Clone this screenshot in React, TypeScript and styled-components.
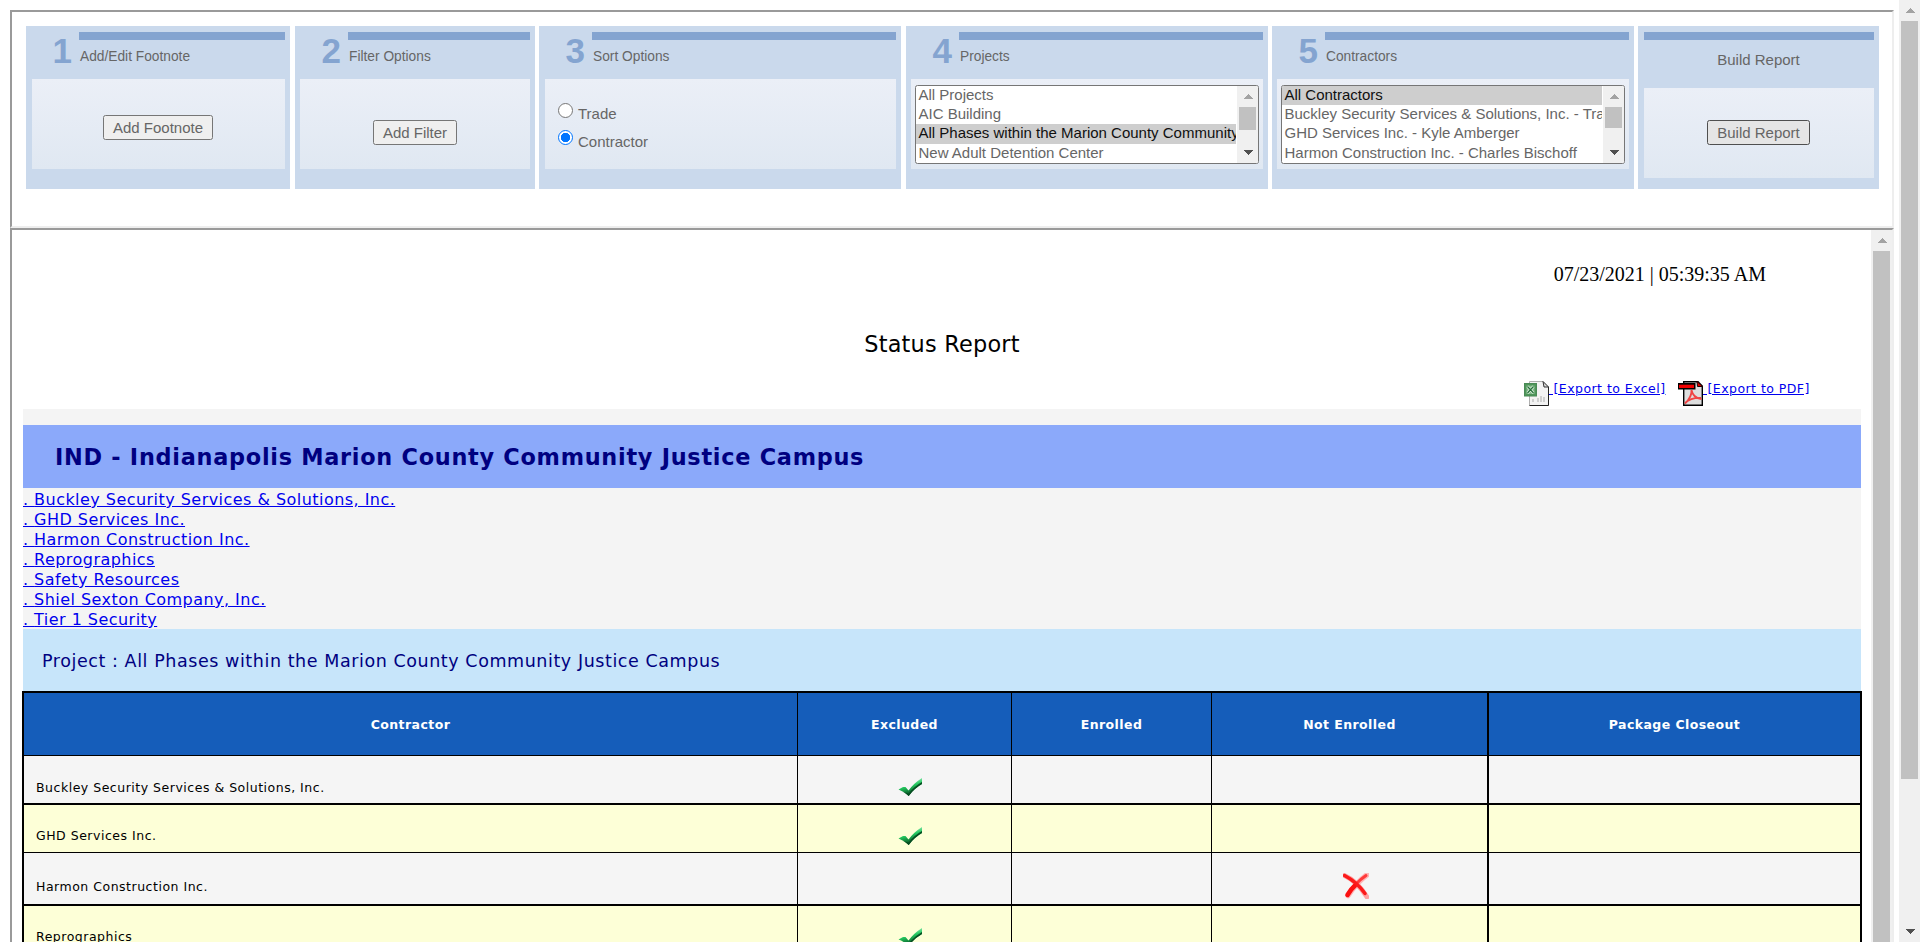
import React from "react";
import styled, { createGlobalStyle } from "styled-components";

const Global = createGlobalStyle`
  * { box-sizing: border-box; }
  html, body { margin: 0; height: 942px; overflow: hidden; background: #fff; }
`;

const arial = `"Liberation Sans", Arial, sans-serif`;
const verdana = `Verdana, "DejaVu Sans", sans-serif`;

const Page = styled.div`
  display: flex;
  width: 1920px;
  height: 942px;
  overflow: hidden;
`;
const Frames = styled.main`
  display: flex;
  flex-direction: column;
  width: 1884px;
  margin: 10px 5px 0 10px;
`;
const FrameBase = styled.section`
  border: 2px solid;
  border-color: #9a9a9a #eee #eee #9a9a9a;
  flex: none;
`;
const OptionsFrame = styled(FrameBase)`
  height: 218px;
  padding: 14px 13px 0 14px;
`;
const ReportFrame = styled(FrameBase)`
  display: flex;
  height: 760px;
`;

/* Scroll bars */
const Track = styled.div<{ $height: string }>`
  width: 21px;
  height: ${(p) => p.$height};
  flex: none;
  display: flex;
  flex-direction: column;
  align-items: center;
  background: #f0f0f0;
`;
const Thumb = styled.div<{ $size: number }>`
  width: 17px;
  height: ${(p) => p.$size}px;
  background: #c1c1c1;
  flex: none;
`;
const ArrowBox = styled.div`
  height: 21px;
  flex: none;
  display: flex;
  align-items: center;
`;
const Spacer = styled.div`
  flex: 1;
`;
const Up = () => (
  <ArrowBox>
    <svg width="10" height="5" viewBox="0 0 10 5" shapeRendering="crispEdges">
      <path d="M5 0 L10 5 H0 Z" fill="#a3a3a3" />
    </svg>
  </ArrowBox>
);
const Down = () => (
  <ArrowBox>
    <svg width="10" height="5" viewBox="0 0 10 5" shapeRendering="crispEdges">
      <path d="M0 0 H10 L5 5 Z" fill="#505050" />
    </svg>
  </ArrowBox>
);

/* Option panels */
const Steps = styled.div`
  display: flex;
`;
const Step = styled.div<{ $w: number; $gap: number; $left: number }>`
  width: ${(p) => p.$w}px;
  height: 163px;
  margin-right: ${(p) => p.$gap}px;
  padding: 6px 5px 0 ${(p) => p.$left}px;
  background: #cad9ec;
  flex: none;
  color: #666;
  font: 15px ${arial};
`;
const StepHead = styled.div<{ $h: number }>`
  display: flex;
  height: ${(p) => p.$h}px;
`;
const StepNumber = styled.div<{ $w: number }>`
  width: ${(p) => p.$w}px;
  padding: 0 7px 0 0;
  text-align: right;
  font: bold 35px/38px ${arial};
  color: #84a4d0;
`;
const StepTitle = styled.div<{ $center?: boolean }>`
  flex: 1;
  border-top: 8px solid #84a4d0;
  padding: ${(p) => (p.$center ? "12px 1px 0 0" : "8px 0 0 1px")};
  text-align: ${(p) => (p.$center ? "center" : "left")};
  font-size: ${(p) => (p.$center ? 15 : 13.75)}px;
  line-height: ${(p) => (p.$center ? 16 : 17)}px;
`;
const StepBody = styled.div<{ $pad: string }>`
  height: 90px;
  display: flex;
  flex-direction: column;
  align-items: flex-start;
  padding: ${(p) => p.$pad};
  background: linear-gradient(#ebeff7, #e0e8f2);
`;
const Button = styled.button<{ $w: number; $hover?: boolean }>`
  width: ${(p) => p.$w}px;
  height: 25px;
  padding: 0;
  border: 1px solid ${(p) => (p.$hover ? "#4f4f4f" : "#767676")};
  border-radius: 2.5px;
  background: ${(p) => (p.$hover ? "#e5e5e5" : "#efefef")};
  color: #666;
  font: 15px/22px ${arial};
`;
const RadioRow = styled.label`
  display: flex;
  height: 27px;
  gap: 5px;
`;
const RadioLabel = styled.span<{ $top: number }>`
  padding-top: ${(p) => p.$top}px;
  line-height: 17px;
`;
const RadioDot = styled.span<{ $on?: boolean }>`
  width: 15px;
  height: 15px;
  border-radius: 50%;
  border: ${(p) => (p.$on ? "1.5px solid #0075ff" : "1px solid #767676")};
  background: ${(p) => (p.$on ? "radial-gradient(circle, #0075ff 4.4px, #fff 5px)" : "#fff")};
`;
const ListBox = styled.div`
  display: flex;
  width: 344px;
  height: 79px;
  border: 1px solid #767676;
  border-radius: 2.5px;
  background: #fff;
  overflow: hidden;
`;
const Options = styled.div`
  width: 321px;
  overflow: hidden;
`;
const Option = styled.div<{ $sel?: boolean }>`
  height: 19.2px;
  width: 320px;
  padding-left: 2.5px;
  line-height: 17px;
  white-space: nowrap;
  overflow: hidden;
  color: ${(p) => (p.$sel ? "#101010" : "#666")};
  background: ${(p) => (p.$sel ? "#cecece" : "transparent")};
`;

/* Report */
const Report = styled.div`
  width: 1859px;
  padding: 0 10px 0 11px;
  font-family: ${verdana};
`;
const DateLine = styled.div`
  height: 101px;
  padding: 32px 95px 0 0;
  text-align: right;
  font: 20px/24px "Liberation Serif", "Times New Roman", serif;
`;
const Title = styled.h1`
  margin: 0;
  height: 45px;
  text-align: center;
  font-weight: normal;
  font-size: 22.4px;
  letter-spacing: 0.22px;
  line-height: 26px;
`;
const Exports = styled.div`
  display: flex;
  justify-content: flex-end;
  height: 33px;
  padding: 5px 49px 0 0;
  font-size: 12.5px;
  letter-spacing: 0.46px;
`;
const ExportLink = styled.a<{ $w: number; $gap: number }>`
  display: flex;
  width: ${(p) => p.$w}px;
  margin-left: ${(p) => p.$gap}px;
  color: #0000ee;
  text-decoration: underline;
  text-underline-offset: 1px;
  line-height: 15px;
  white-space: pre;
`;
const Campus = styled.h2`
  margin: 0;
  height: 79px;
  border-top: 16px solid #f4f4f4;
  padding-left: 32px;
  background: #8ba9fa;
  color: #000080;
  font-size: 22.4px;
  letter-spacing: 0.72px;
  line-height: 65px;
`;
const Names = styled.div`
  height: 141px;
  padding-top: 1px;
  background: #f4f4f4;
  font-size: 16px;
  letter-spacing: 0.46px;
`;
const NameLink = styled.a`
  display: block;
  height: 20px;
  line-height: 22px;
  color: #0000ee;
  text-decoration: underline;
`;
const Project = styled.div`
  height: 62px;
  padding-left: 19px;
  background: #c7e5fa;
  color: #000080;
  font-size: 17.5px;
  letter-spacing: 0.57px;
  line-height: 64px;
`;
const Grid = styled.div`
  width: 1840px;
  margin-left: -1px;
  border: 2px solid #000;
  font-size: 12.5px;
  letter-spacing: 0.51px;
`;
const Row = styled.div<{ $h: number; $line: number; $bg: string }>`
  display: grid;
  grid-template-columns: 774px 214px 200px 277px 371px;
  height: ${(p) => p.$h}px;
  border-bottom: ${(p) => p.$line}px solid #000;
  background: ${(p) => p.$bg};
`;
const Cell = styled.div<{ $wide?: boolean }>`
  display: flex;
  border-right: ${(p) => (p.$wide ? 2 : 1)}px solid #000;
  &:last-child { border-right: 0; }
`;
const HeadCell = styled(Cell)`
  align-items: center;
  justify-content: center;
  padding-top: 1px;
  color: #fff;
  font-weight: bold;
  letter-spacing: 0.42px;
`;
const NameCell = styled(Cell)<{ $top: number }>`
  padding: ${(p) => p.$top}px 0 0 12px;
  line-height: 16px;
`;
const MarkCell = styled(Cell)<{ $top: number }>`
  justify-content: center;
  padding: ${(p) => p.$top}px 0 0 12px;
`;

const Check = () => (
  <svg width="25" height="20" viewBox="0 0 25 20">
    <defs>
      <linearGradient id="tick" x1="0" y1="0" x2="0.35" y2="1">
        <stop offset="0.15" stopColor="#b5f8cf" />
        <stop offset="0.55" stopColor="#22c55d" />
        <stop offset="1" stopColor="#04451c" />
      </linearGradient>
    </defs>
    <path d="M0.5 12.5 L5 10 L7.5 10 L10.5 13.5 Q16 6 24 1 L24 7 Q16 11.5 10.7 19 Q6 14.5 0.5 12.5Z" fill="url(#tick)" />
    <path d="M5 15 Q8.5 16 10.7 19 Q16 11.5 24 7 L24 5 Q16 9.5 10.6 16.6 Z" fill="#064d21" />
  </svg>
);
const Cross = () => (
  <svg width="26" height="26" viewBox="0 0 26 26" fill="none" strokeLinecap="round">
    <path d="M24.5 1.5 Q14 9 5 22.5" stroke="#ffb3b3" strokeWidth="5.5" />
    <path d="M1.5 2.5 Q14 8 24 24" stroke="#ffa0a0" strokeWidth="4.8" />
    <path d="M23 2.5 Q12 10 4.5 22" stroke="#ff3a3a" strokeWidth="3" />
    <path d="M12 12.5 Q8 16 4.5 22" stroke="#fb1010" strokeWidth="4.5" />
    <path d="M1.5 2.5 Q14 9 22 20.5" stroke="#fb1a1a" strokeWidth="3.4" />
  </svg>
);
const ExcelIcon = () => (
  <svg width="25" height="25" viewBox="0 0 25 25">
    <path d="M5.5 0.5 H19 L24.5 6 V24.5 H5.5 Z" fill="#f3f3f3" stroke="#b0b0b0" />
    <path d="M24.5 6 V24.5 H5.5" fill="none" stroke="#222" />
    <path d="M19 0.5 L24.5 6 H20 Z" fill="#ddd" stroke="#333" />
    <path d="M14 21 V17 M17 21 V15 M20 21 V16 M9 21 V18" stroke="#c4c4c4" strokeWidth="1.5" />
    <rect x="0.5" y="2.5" width="12" height="12.5" fill="#4f965a" stroke="#4a8a56" />
    <rect x="2.5" y="4.5" width="8" height="8.5" fill="#83b98a" />
    <path d="M3.5 5.5 L9.5 12 M9.5 5.5 L3.5 12" stroke="#e4f2e4" strokeWidth="2.6" />
    <path d="M3.5 5.5 L9.5 12 M9.5 5.5 L3.5 12" stroke="#25713a" strokeWidth="1.3" />
  </svg>
);
const PdfIcon = () => (
  <svg width="25" height="25" viewBox="0 0 25 25">
    <path d="M5.7 0.7 H20 L24.3 5 V24.3 H5.7 Z" fill="#dedede" stroke="#000" strokeWidth="1.4" />
    <path d="M19 0.5 L24.5 5.5 H19.5 Z" fill="#e00000" stroke="#200" />
    <path d="M13.5 9 Q14 16 7 22.5 M13.5 9 Q15 17 23.5 18 M7 22 Q13 16.5 23 17" fill="none" stroke="#f04444" strokeWidth="1.8" />
    <rect x="0" y="2" width="17.5" height="6.5" fill="#000" />
    <rect x="1" y="3.7" width="15" height="3.3" fill="#f00000" />
  </svg>
);

const projects = [
  "All Projects",
  "AIC Building",
  "All Phases within the Marion County Community Justice Campus",
  "New Adult Detention Center",
];
const contractors = [
  "All Contractors",
  "Buckley Security Services & Solutions, Inc. - Travis",
  "GHD Services Inc. - Kyle Amberger",
  "Harmon Construction Inc. - Charles Bischoff",
];
const names = [
  "Buckley Security Services & Solutions, Inc.",
  "GHD Services Inc.",
  "Harmon Construction Inc.",
  "Reprographics",
  "Safety Resources",
  "Shiel Sexton Company, Inc.",
  "Tier 1 Security",
];
const rows = [
  { name: names[0], h: 49, line: 2, top: 24, mark: 21, ok: true },
  { name: names[1], h: 48, line: 1, top: 23, mark: 21, ok: true },
  { name: names[2], h: 53, line: 2, top: 26, mark: 20, ok: false },
  { name: names[3], h: 53, line: 1, top: 23, mark: 21, ok: true },
];

const Select = ({ items, selected, thumb }: { items: string[]; selected: number; thumb: number }) => (
  <ListBox>
    <Options>
      {items.map((t, i) => (
        <Option key={t} $sel={i === selected}>{t}</Option>
      ))}
    </Options>
    <Track $height="77px">
      <Up />
      <Thumb $size={thumb} />
      <Spacer />
      <Down />
    </Track>
  </ListBox>
);

const Panel = (p: {
  n: number; title: string; w: number; gap: number; left: number; numW: number;
  pad: string; children: React.ReactNode;
}) => (
  <Step $w={p.w} $gap={p.gap} $left={p.left}>
    <StepHead $h={47}>
      <StepNumber $w={p.numW}>{p.n}</StepNumber>
      <StepTitle>{p.title}</StepTitle>
    </StepHead>
    <StepBody $pad={p.pad}>{p.children}</StepBody>
  </Step>
);

export default function App() {
  return (
    <Page>
      <Global />
      <Frames>
        <OptionsFrame>
          <Steps>
            <Panel n={1} title="Add/Edit Footnote" w={264} gap={5} left={6} numW={47} pad="36px 0 0 71px">
              <Button $w={110}>Add Footnote</Button>
            </Panel>
            <Panel n={2} title="Filter Options" w={240} gap={4} left={5} numW={48} pad="41px 0 0 73px">
              <Button $w={84}>Add Filter</Button>
            </Panel>
            <Panel n={3} title="Sort Options" w={362} gap={5} left={6} numW={47} pad="24px 0 0 13px">
              <RadioRow><RadioDot /><RadioLabel $top={2}>Trade</RadioLabel></RadioRow>
              <RadioRow><RadioDot $on /><RadioLabel $top={3}>Contractor</RadioLabel></RadioRow>
            </Panel>
            <Panel n={4} title="Projects" w={362} gap={4} left={5} numW={48} pad="6px 0 0 4px">
              <Select items={projects} selected={2} thumb={23} />
            </Panel>
            <Panel n={5} title="Contractors" w={362} gap={4} left={5} numW={48} pad="6px 0 0 4px">
              <Select items={contractors} selected={0} thumb={21} />
            </Panel>
            <Step $w={241} $gap={0} $left={6}>
              <StepHead $h={56}><StepTitle $center>Build Report</StepTitle></StepHead>
              <StepBody $pad="32px 0 0 63px">
                <Button $w={103} $hover>Build Report</Button>
              </StepBody>
            </Step>
          </Steps>
        </OptionsFrame>
        <ReportFrame>
          <Report>
            <DateLine>07/23/2021 | 05:39:35 AM</DateLine>
            <Title>Status Report</Title>
            <Exports>
              <ExportLink $w={144} $gap={0}><ExcelIcon /><span> [Export to Excel]</span></ExportLink>
              <ExportLink $w={134} $gap={10}><PdfIcon /><span> [Export to PDF]</span></ExportLink>
            </Exports>
            <Campus>IND - Indianapolis Marion County Community Justice Campus</Campus>
            <Names>
              {names.map((n) => (
                <NameLink key={n}><span>. {n}</span></NameLink>
              ))}
            </Names>
            <Project>Project : All Phases within the Marion County Community Justice Campus</Project>
            <Grid>
              <Row $h={63} $line={1} $bg="#155dba">
                <HeadCell>Contractor</HeadCell>
                <HeadCell>Excluded</HeadCell>
                <HeadCell>Enrolled</HeadCell>
                <HeadCell $wide>Not Enrolled</HeadCell>
                <HeadCell>Package Closeout</HeadCell>
              </Row>
              {rows.map((r, i) => (
                <Row key={r.name} $h={r.h} $line={r.line} $bg={i % 2 ? "#fdffd7" : "#f5f5f5"}>
                  <NameCell $top={r.top}>{r.name}</NameCell>
                  <MarkCell $top={r.mark}>{r.ok && <Check />}</MarkCell>
                  <Cell />
                  <MarkCell $wide $top={r.mark}>{!r.ok && <Cross />}</MarkCell>
                  <Cell />
                </Row>
              ))}
            </Grid>
          </Report>
          <Track $height="756px">
            <Up />
            <Thumb $size={735} />
          </Track>
        </ReportFrame>
      </Frames>
      <Track $height="942px">
        <Up />
        <Thumb $size={758} />
        <Spacer />
        <Down />
      </Track>
    </Page>
  );
}
